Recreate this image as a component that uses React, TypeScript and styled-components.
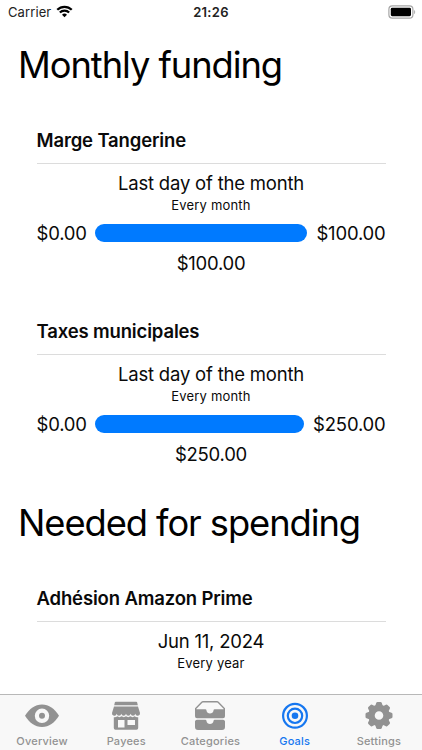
import React from 'react';
import styled, { createGlobalStyle } from 'styled-components';

const GlobalStyle = createGlobalStyle`
  * { box-sizing: border-box; }
  html, body, #root { height: 100%; }
  body { margin: 0; background: #fff; overflow: hidden; }
`;

const Screen = styled.div`
  height: 100vh;
  display: flex;
  flex-direction: column;
  overflow: hidden;
  background: #fff;
  color: #0a0a0a;
  font-family: Inter, 'Liberation Sans', sans-serif;
  font-feature-settings: 'calt' 0;
  white-space: nowrap;
`;

const StatusBar = styled.header`
  flex: none;
  height: 24px;
  padding: 0 6px 0 8px;
  display: grid;
  grid-template-columns: 1fr auto 1fr;
  align-items: center;
  font-size: 13px;
  line-height: 24px;
  color: #222;
`;

const Carrier = styled.div`
  display: flex;
  align-items: center;
  gap: 5px;
  letter-spacing: 0.1px;
  svg { margin-top: -1px; }
`;

const Clock = styled.div`
  margin-right: 2px;
  font-weight: 600;
  letter-spacing: 0.3px;
`;

const BatterySlot = styled.div`
  display: flex;
  justify-content: flex-end;
  svg { margin-top: -1px; }
`;

const Content = styled.main`
  flex: 1;
  min-height: 0;
  overflow: hidden;
  padding: 0 18px;
`;

const Section = styled.div`
  & + & { margin-top: -4px; }
`;

const SectionTitle = styled.h1`
  margin: 0;
  height: 80px;
  line-height: 83px;
  font-size: 36.3px;
  font-weight: 400;
  letter-spacing: -1.06px;
  color: #000;
`;

const Card = styled.section`
  height: 191px;
  padding: 22px 18.5px 0;
`;

const CardTitle = styled.h2`
  margin: 0;
  height: 38px;
  line-height: 28px;
  font-size: 18.5px;
  font-weight: 600;
  letter-spacing: -0.15px;
  border-bottom: 1px solid #dcdcdc;
`;

const Due = styled.div`
  height: 26px;
  margin-top: 6px;
  line-height: 26px;
  text-align: center;
  font-size: 18.5px;
  letter-spacing: -0.2px;
`;

const Frequency = styled.div`
  height: 18px;
  line-height: 18px;
  text-align: center;
  font-size: 13px;
  letter-spacing: 0.18px;
`;

const ProgressRow = styled.div`
  display: flex;
  align-items: center;
  gap: 9px;
  height: 28px;
  margin-top: 5px;
`;

const Amount = styled.span`
  font-size: 18.5px;
  line-height: 28px;
  letter-spacing: -0.2px;
`;

const Track = styled.div`
  flex: 1;
  height: 18px;
  margin-left: -1px;
  border-radius: 9px;
  background: #007aff;
`;

const Total = styled.div`
  height: 30px;
  line-height: 32px;
  text-align: center;
  font-size: 18.5px;
  letter-spacing: -0.25px;
`;

const TabBar = styled.nav`
  flex: none;
  height: 56px;
  display: grid;
  grid-template-columns: repeat(5, 1fr);
  padding-right: 1px;
  border-top: 1px solid #b8b8b8;
  background: #f8f8f8;
`;

const Tab = styled.div<{ $active?: boolean }>`
  display: flex;
  flex-direction: column;
  align-items: center;
  padding-top: 3px;
  color: ${(p) => (p.$active ? '#1677f0' : '#929292')};
  svg { display: block; }
`;

const TabLabel = styled.span`
  font-size: 11px;
  line-height: 14px;
  font-weight: 500;
  letter-spacing: 0.2px;
`;

const WifiIcon = () => (
  <svg width="17" height="13" viewBox="0 0 18 14" fill="none" stroke="#000" strokeWidth="2.4">
    <path d="M1.2 5.2a11 11 0 0 1 15.6 0" />
    <path d="M4 8.1a7 7 0 0 1 10 0" />
    <path d="M9 13.2 6.300 10.500a3.800 3.800 0 0 1 5.400 0Z" fill="#000" stroke="none" />
  </svg>
);

const BatteryIcon = () => (
  <svg width="28" height="14" viewBox="0 0 28 14">
    <rect x="0.9" y="0.9" width="24" height="12.2" rx="3.4" fill="#fff" stroke="#a6a6a6" strokeWidth="1.2" />
    <rect x="2.8" y="2.8" width="20.2" height="8.4" rx="1.4" fill="#000" />
    <path d="M26.2 4.9c1.3.5 1.3 3.7 0 4.2Z" fill="#a6a6a6" />
  </svg>
);

const EyeIcon = () => (
  <svg width="36" height="36" viewBox="0 0 36 36">
    <path d="M1 17.800C5.500 10.600 11 6.600 18 6.600S30.500 10.600 35 17.800C30.500 25 25 29 18 29S5.500 25 1 17.800Z" fill="currentColor" />
    <circle cx="18" cy="17.800" r="5.100" fill="none" stroke="#f8f8f8" strokeWidth="4.200" />
  </svg>
);

const StoreIcon = () => (
  <svg width="36" height="36" viewBox="0 0 36 36" fill="currentColor">
    <path d="M7.800 3.700h20.400a1 1 0 0 1 1 .8l.6 2.700H6.200l.6-2.700a1 1 0 0 1 1-.8Z" />
    <path d="M6 8.500h24l2 6.500a2.300 2.300 0 0 1-4.670.8 2.400 2.400 0 0 1-4.670 0 2.400 2.400 0 0 1-4.670 0 2.400 2.400 0 0 1-4.670 0 2.400 2.400 0 0 1-4.670 0A2.300 2.300 0 0 1 4 15Z" />
    <path fillRule="evenodd" d="M5.800 19.200c1.300.2 2.600-.1 3.500-.9 1.400 1.100 3 1.100 4.350 0 1.400 1.100 3 1.100 4.350 0 1.400 1.100 3 1.100 4.350 0 1.400 1.100 3 1.100 4.350 0 .9.800 2.200 1.100 3.500.9V30a1.700 1.700 0 0 1-1.700 1.700h-21A1.700 1.700 0 0 1 5.800 30ZM10 22v7.500h6.500V22Zm9.500 0v5H27v-5Z" />
  </svg>
);

const DrawersIcon = () => (
  <svg width="36" height="36" viewBox="0 0 36 36" fill="currentColor">
    <path d="M3.700 12.500v-2L9.800 4.300q.5-.5 1.200-.5h14q.7 0 1.200.500l6.100 6.200v2" fill="none" stroke="currentColor" strokeWidth="1.400" />
    <path d="M3 11.300h10.300q1.100 0 1.200 1.100c.2 4 6.800 4 7 0q.1-1.100 1.200-1.100H33v7a2 2 0 0 1-2 2H5a2 2 0 0 1-2-2Z" />
    <path d="M5 21.800h8.300q1.100 0 1.200 1.100c.2 4 6.800 4 7 0q.1-1.100 1.200-1.100H31a2 2 0 0 1 2 1.500V29a3 3 0 0 1-3 3H6a3 3 0 0 1-3-3v-5.700a2 2 0 0 1 2-1.500Z" />
  </svg>
);

const TargetIcon = () => (
  <svg width="36" height="36" viewBox="0 0 36 36" fill="none" stroke="currentColor" strokeWidth="2.200">
    <circle cx="18" cy="17.800" r="11.900" />
    <circle cx="18" cy="17.800" r="7.200" />
    <circle cx="18" cy="17.800" r="3.300" fill="currentColor" stroke="none" />
  </svg>
);

const GearIcon = () => (
  <svg width="36" height="36" viewBox="0 0 36 36" fill="none" stroke="currentColor">
    <circle cx="18" cy="17.500" r="7.500" strokeWidth="6.400" />
    {[0, 45, 90, 135, 180, 225, 270, 315].map((a) => (
      <path key={a} d="M13.800 9.200 15.200 5q.3-1 1.300-1h3q1 0 1.300 1l1.400 4.200Z" fill="currentColor" stroke="none" transform={`rotate(${a} 18 17.5)`} />
    ))}
  </svg>
);

interface Goal {
  name: string;
  due: string;
  frequency: string;
  start?: string;
  target?: string;
}

const sections: { title: string; goals: Goal[] }[] = [
  {
    title: 'Monthly funding',
    goals: [
      { name: 'Marge Tangerine', due: 'Last day of the month', frequency: 'Every month', start: '$0.00', target: '$100.00' },
      { name: 'Taxes municipales', due: 'Last day of the month', frequency: 'Every month', start: '$0.00', target: '$250.00' },
    ],
  },
  {
    title: 'Needed for spending',
    goals: [{ name: 'Adhésion Amazon Prime', due: 'Jun 11, 2024', frequency: 'Every year' }],
  },
];

const tabs = [
  { label: 'Overview', Icon: EyeIcon },
  { label: 'Payees', Icon: StoreIcon },
  { label: 'Categories', Icon: DrawersIcon },
  { label: 'Goals', Icon: TargetIcon, active: true },
  { label: 'Settings', Icon: GearIcon },
];

const GoalCard = ({ goal }: { goal: Goal }) => (
  <Card>
    <CardTitle>{goal.name}</CardTitle>
    <Due>{goal.due}</Due>
    <Frequency>{goal.frequency}</Frequency>
    {goal.target && (
      <>
        <ProgressRow>
          <Amount>{goal.start}</Amount>
          <Track />
          <Amount>{goal.target}</Amount>
        </ProgressRow>
        <Total>{goal.target}</Total>
      </>
    )}
  </Card>
);

export default function App() {
  return (
    <Screen>
      <GlobalStyle />
      <StatusBar>
        <Carrier>
          Carrier
          <WifiIcon />
        </Carrier>
        <Clock>21:26</Clock>
        <BatterySlot>
          <BatteryIcon />
        </BatterySlot>
      </StatusBar>
      <Content>
        {sections.map((s) => (
          <Section key={s.title}>
            <SectionTitle>{s.title}</SectionTitle>
            {s.goals.map((g) => (
              <GoalCard key={g.name} goal={g} />
            ))}
          </Section>
        ))}
      </Content>
      <TabBar>
        {tabs.map(({ label, Icon, active }) => (
          <Tab key={label} $active={active}>
            <Icon />
            <TabLabel>{label}</TabLabel>
          </Tab>
        ))}
      </TabBar>
    </Screen>
  );
}
